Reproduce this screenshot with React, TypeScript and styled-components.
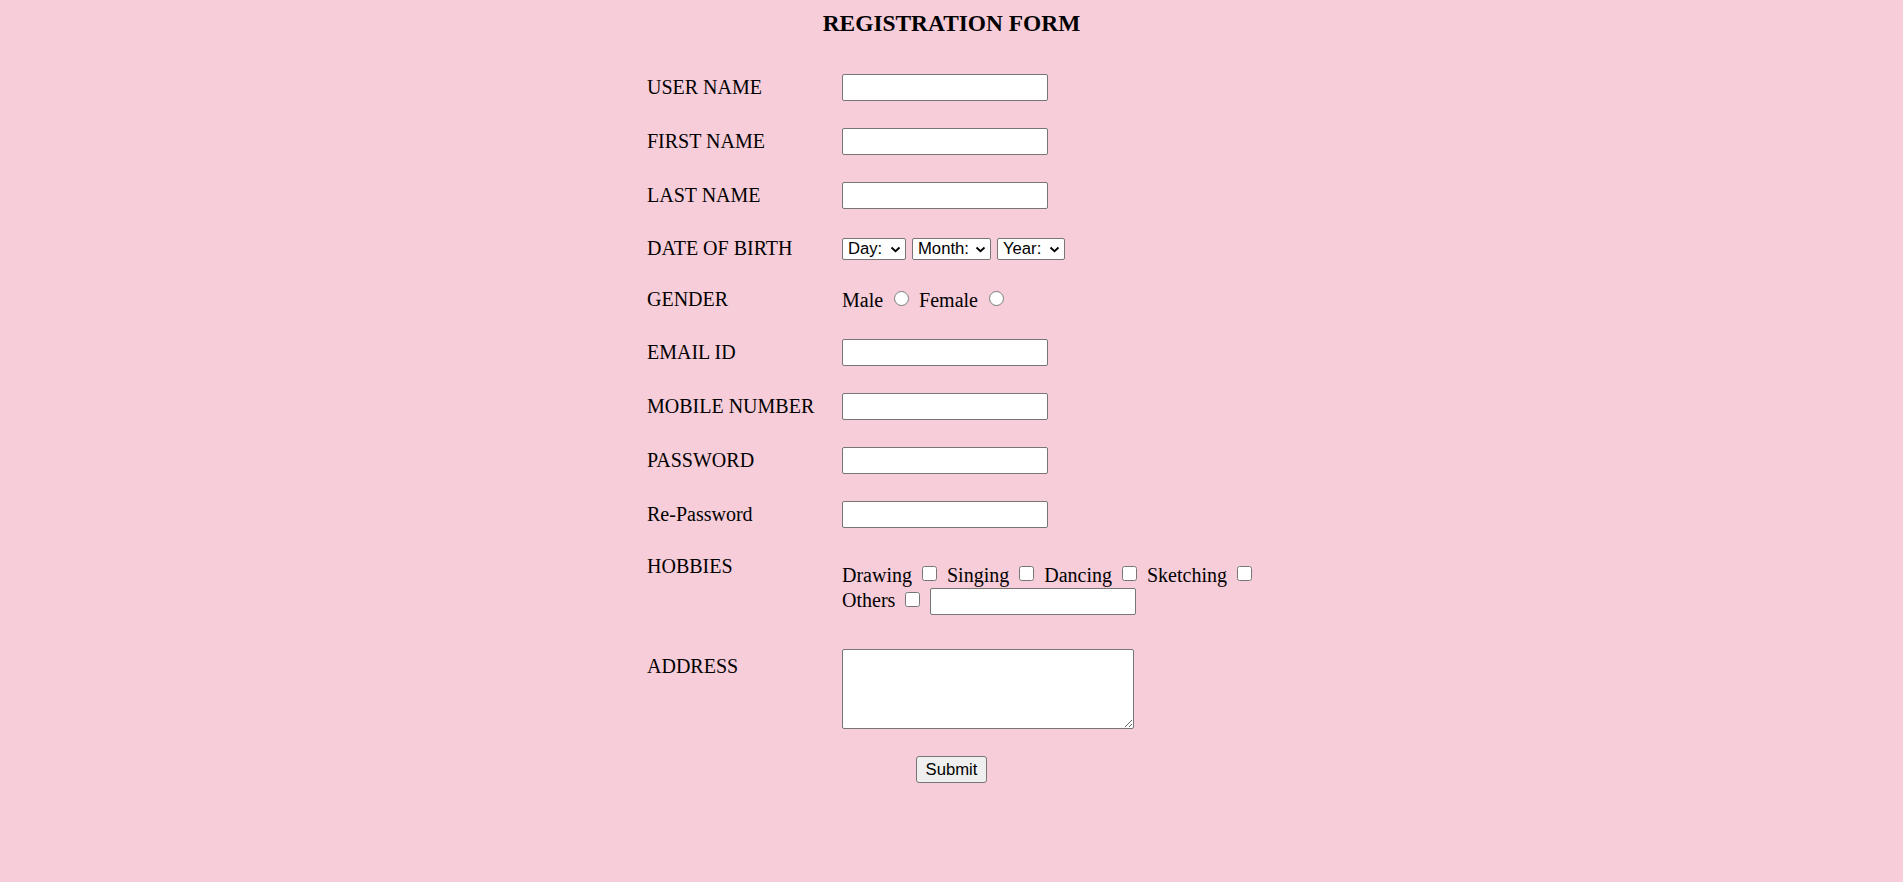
import React from 'react';
import styled, { createGlobalStyle } from 'styled-components';

const GlobalStyle = createGlobalStyle`
  body {
    margin: 0;
    background: #f7cdd9;
    font-family: "Liberation Serif", "Times New Roman", serif;
    color: #000;
  }
`;

const Page = styled.div`
  padding-top: 10px;
  min-height: 872px;
`;

const Title = styled.h3`
  margin: 0;
  text-align: center;
  font-size: 23.4px;
  line-height: 27px;
  font-weight: bold;
`;

const Form = styled.form`
  width: 609px;
  margin: 37px auto 0;
  display: grid;
  grid-template-columns: 195px minmax(0, 1fr);
  row-gap: 27px;
  align-items: center;
`;

const Label = styled.label<{ $top?: number }>`
  font-size: 20px;
  line-height: 22px;
  white-space: nowrap;
  align-self: ${(p) => (p.$top !== undefined ? 'start' : 'center')};
  margin-top: ${(p) => p.$top ?? 0}px;
  margin-bottom: ${(p) => (p.$top !== undefined ? 0 : 2)}px;
`;

const Field = styled.div<{ $h?: number }>`
  display: flex;
  align-items: center;
  min-height: ${(p) => p.$h ?? 27}px;
  font-size: 20px;
  line-height: 22px;
`;

const TextInput = styled.input`
  box-sizing: border-box;
  width: 206px;
  height: 27px;
  padding: 1px 3px;
  border: 1px solid #767676;
  border-radius: 2px;
  background: #fff;
  font: 16.67px Arial, "Liberation Sans", sans-serif;
`;

const SelectBox = styled.span`
  position: relative;
  display: inline-flex;
  margin-right: 6px;
`;

const Select = styled.select<{ $w: number }>`
  box-sizing: border-box;
  appearance: none;
  width: ${(p) => p.$w}px;
  height: 22px;
  padding: 0 0 0 5px;
  border: 1px solid #767676;
  border-radius: 2px;
  background: #fff;
  color: #000;
  font: 16.67px Arial, "Liberation Sans", sans-serif;
`;

const Chevron = styled.svg`
  position: absolute;
  right: 5px;
  top: 8px;
  width: 11px;
  height: 7px;
  pointer-events: none;
`;

const Radio = styled.input`
  width: 15px;
  height: 15px;
  margin: 0 10px 3px 11px;
`;

const HobbyList = styled.div`
  align-self: start;
  min-width: 0;
  padding-top: 9px;
  font-size: 20px;
  line-height: 22px;
`;

const HobbyLine = styled.div<{ $gap?: number }>`
  display: flex;
  align-items: baseline;
  margin-top: ${(p) => p.$gap ?? 0}px;
`;

const Check = styled.input`
  align-self: center;
  flex-shrink: 0;
  width: 15px;
  height: 15px;
  margin: 0 10px 4px 10px;
`;

const Address = styled.textarea`
  box-sizing: border-box;
  align-self: start;
  margin-top: 7px;
  width: 292px;
  height: 80px;
  padding: 2px;
  border: 1px solid #767676;
  border-radius: 2px;
  background: #fff;
`;

const SubmitRow = styled.div`
  grid-column: 1 / -1;
  display: flex;
  justify-content: center;
`;

const SubmitButton = styled.button`
  box-sizing: border-box;
  width: 71px;
  height: 27px;
  padding: 1px 7px;
  border: 1px solid #767676;
  border-radius: 3px;
  background: #efefef;
  color: #000;
  font: 16.67px Arial, "Liberation Sans", sans-serif;
`;

const textRows = ['USER NAME', 'FIRST NAME', 'LAST NAME'];
const lowerRows = ['EMAIL ID', 'MOBILE NUMBER', 'PASSWORD', 'Re-Password'];
const hobbies = ['Drawing', 'Singing', 'Dancing', 'Sketching'];
const dateParts = [
  { label: 'Day:', width: 64 },
  { label: 'Month:', width: 79 },
  { label: 'Year:', width: 68 },
];

export default function App() {
  return (
    <Page>
      <GlobalStyle />
      <Title>REGISTRATION FORM</Title>
      <Form onSubmit={(e) => e.preventDefault()}>
        {textRows.map((label) => (
          <React.Fragment key={label}>
            <Label>{label}</Label>
            <Field>
              <TextInput type="text" />
            </Field>
          </React.Fragment>
        ))}

        <Label>DATE OF BIRTH</Label>
        <Field $h={25}>
          {dateParts.map((d) => (
            <SelectBox key={d.label}>
              <Select $w={d.width} defaultValue="">
                <option value="">{d.label}</option>
              </Select>
              <Chevron viewBox="0 0 11 7">
                <path d="M1.5 1.5 L5.5 5.2 L9.5 1.5" fill="none" stroke="#000" strokeWidth="1.8" />
              </Chevron>
            </SelectBox>
          ))}
        </Field>

        <Label>GENDER</Label>
        <Field $h={23}>
          <span>Male</span>
          <Radio type="radio" name="gender" />
          <span>Female</span>
          <Radio type="radio" name="gender" />
        </Field>

        {lowerRows.map((label) => (
          <React.Fragment key={label}>
            <Label>{label}</Label>
            <Field>
              <TextInput type={label.toLowerCase().includes('password') ? 'password' : 'text'} />
            </Field>
          </React.Fragment>
        ))}

        <Label $top={0}>HOBBIES</Label>
        <HobbyList>
          <HobbyLine>
            {hobbies.map((h) => (
              <React.Fragment key={h}>
                <span>{h}</span>
                <Check type="checkbox" />
              </React.Fragment>
            ))}
          </HobbyLine>
          <HobbyLine $gap={2}>
            <span>Others</span>
            <Check type="checkbox" />
            <TextInput type="text" />
          </HobbyLine>
        </HobbyList>

        <Label $top={13}>ADDRESS</Label>
        <Address />

        <SubmitRow>
          <SubmitButton type="submit">Submit</SubmitButton>
        </SubmitRow>
      </Form>
    </Page>
  );
}
